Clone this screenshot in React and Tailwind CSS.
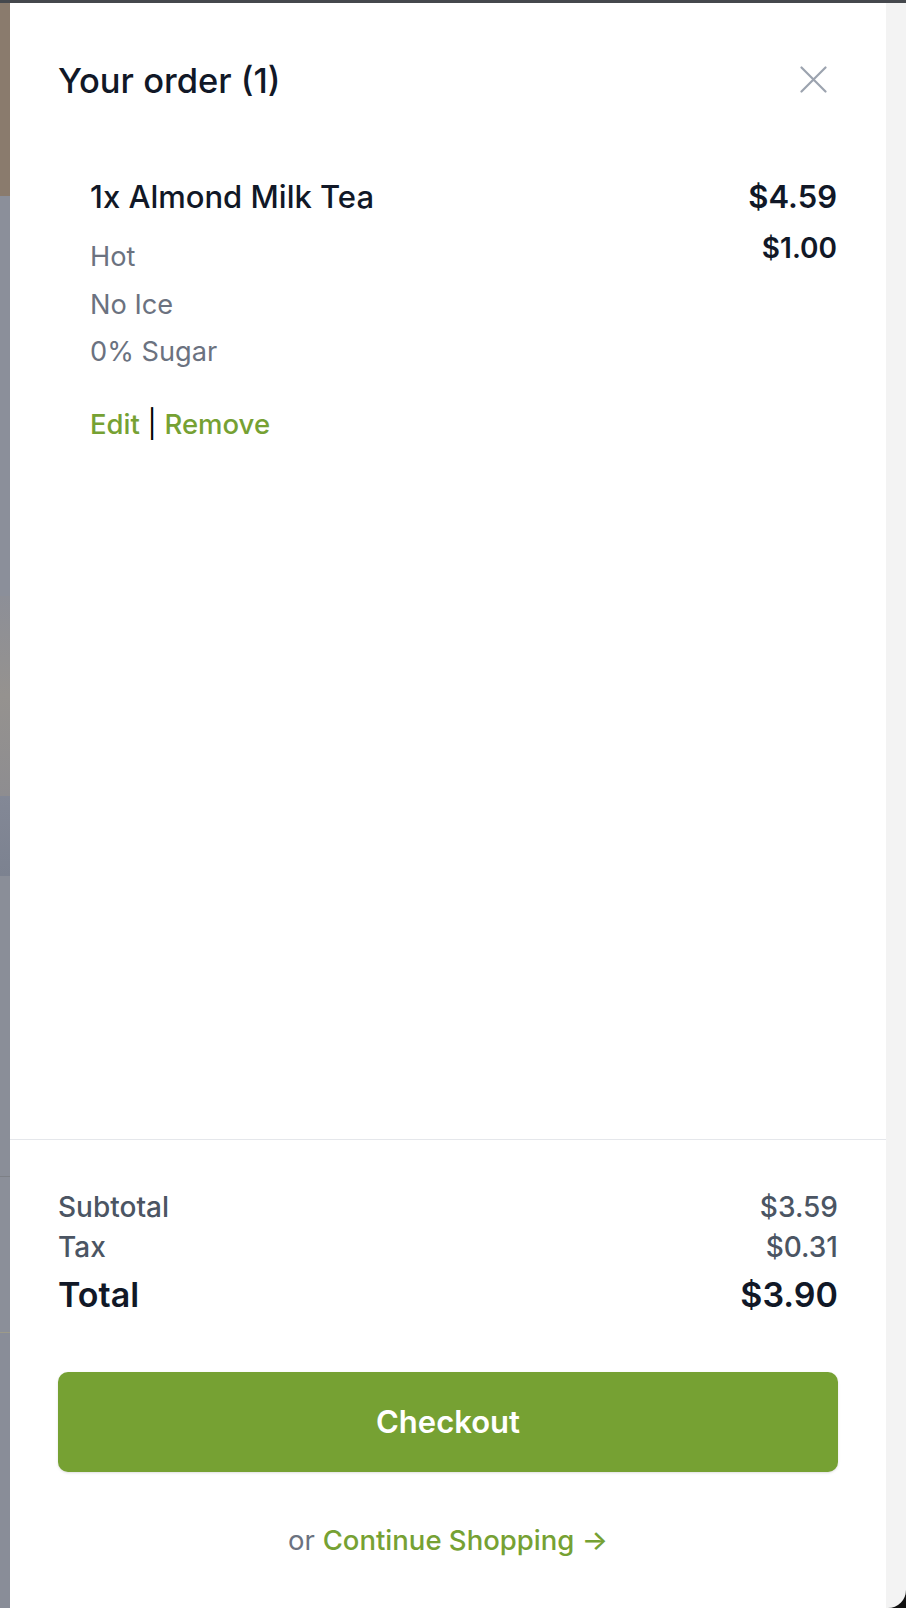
const order = {
  qty: 1,
  name: "Almond Milk Tea",
  price: "$4.59",
  extras: ["$1.00"],
  options: ["Hot", "No Ice", "0% Sugar"],
};

const totals = { subtotal: "$3.59", tax: "$0.31", total: "$3.90" };

function CloseIcon() {
  return (
    <svg width="27" height="27" viewBox="0 0 27 27" fill="none" className="mt-[5px] mr-[11px]">
      <path d="M1.5 1.5l24 24M25.5 1.5l-24 24" stroke="#9ca3af" strokeWidth="2.2" strokeLinecap="round" />
    </svg>
  );
}

function Backdrop() {
  // blurred page peeking out on the left of the drawer
  return (
    <div className="w-[10px] flex flex-col">
      <div className="h-[193px] bg-[#8a7b6d]" />
      <div className="h-[400px] bg-[#8b8f9a]" />
      <div className="h-[200px] bg-gradient-to-b from-[#8d8f97] via-[#95928f] to-[#8e8d90]" />
      <div className="h-[80px] bg-gradient-to-b from-[#838896] to-[#7c8290]" />
      <div className="h-[300px] bg-[#8a8e98]" />
      <div className="h-[1px] bg-[#7d8086]" />
      <div className="h-[155px] bg-[#8b8f99]" />
      <div className="h-[1px] bg-[#9c9a8a]" />
      <div className="flex-1 bg-[#898d98]" />
    </div>
  );
}

export default function App() {
  return (
    <div className="h-[1608px] w-[906px] bg-[#111] flex flex-col font-['Inter',sans-serif] text-[#111827]">
      <div className="h-[3px] bg-[#45484d]" />
      <div className="flex-1 flex">
        <Backdrop />

        <aside className="w-[876px] bg-white flex flex-col">
          <header className="pt-[58px] px-[48px] flex items-start justify-between">
            <h2 className="text-[34.5px] leading-[40px] font-medium">Your order ({order.qty})</h2>
            <CloseIcon />
          </header>

          <div className="flex-1 px-[48px]">
            <div className="mt-[76px] ml-[32px] mr-[1px] flex items-start justify-between">
              <div>
                <p className="text-[31px] leading-[40px] font-medium">
                  {order.qty}x {order.name}
                </p>
                <ul className="mt-[16px] text-[27.2px] leading-[47.5px] text-[#6b7280]">
                  {order.options.map((opt) => (
                    <li key={opt}>{opt}</li>
                  ))}
                </ul>
                <p className="mt-[30px] text-[27.5px] leading-[36px] font-medium">
                  <span className="text-[#76a133]">Edit</span>
                  <span className="text-black font-normal"> | </span>
                  <span className="text-[#76a133]">Remove</span>
                </p>
              </div>
              <div className="text-right font-semibold">
                <p className="text-[31px] leading-[40px]">{order.price}</p>
                {order.extras.map((x) => (
                  <p key={x} className="mt-[11px] text-[28px] leading-[40px]">
                    {x}
                  </p>
                ))}
              </div>
            </div>
          </div>

          <footer className="border-t border-[#e5e7eb] pt-[47px] pb-[48px] px-[48px]">
            <div className="flex justify-between text-[28px] leading-[40px] font-medium text-[#4b5563]">
              <span>Subtotal</span>
              <span>{totals.subtotal}</span>
            </div>
            <div className="flex justify-between text-[28px] leading-[40px] font-medium text-[#4b5563]">
              <span>Tax</span>
              <span>{totals.tax}</span>
            </div>
            <div className="mt-[6px] flex justify-between text-[34px] leading-[44px] font-semibold">
              <span>Total</span>
              <span>{totals.total}</span>
            </div>
            <button
              type="button"
              className="mt-[55px] w-full h-[100px] rounded-[10px] bg-[#76a133] text-white text-[31px] font-semibold shadow-sm"
            >
              Checkout
            </button>
            <p className="mt-[48px] text-center text-[27.5px] leading-[40px] text-[#6b7280]">
              or{" "}
              <span className="font-medium text-[#76a133]">Continue Shopping →</span>
            </p>
          </footer>
        </aside>

        <div className="w-[20px] bg-[#f3f3f3] rounded-br-[18px]" />
      </div>
    </div>
  );
}
